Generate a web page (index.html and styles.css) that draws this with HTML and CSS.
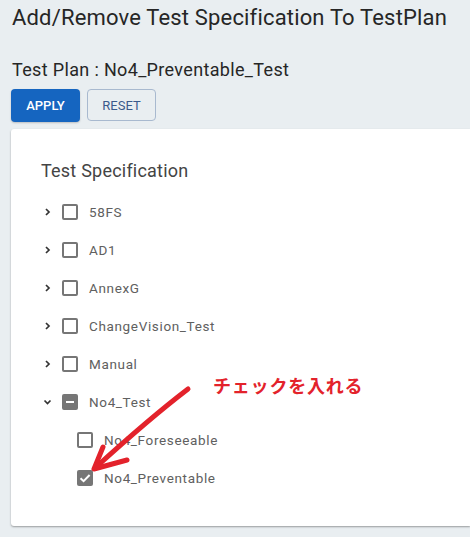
FILE: index.html
```html
<!DOCTYPE html>
<html lang="ja">
<head>
<meta charset="utf-8">
<title>Add/Remove Test Specification To TestPlan</title>
<link rel="stylesheet" href="styles.css">
</head>
<body>
<div class="page">
  <h1 class="title">Add/Remove Test Specification To TestPlan</h1>
  <div class="plan">Test Plan : No4_Preventable_Test</div>
  <div class="actions">
    <button class="btn btn-primary">APPLY</button>
    <button class="btn btn-outline">RESET</button>
  </div>
  <div class="card">
    <div class="card-title">Test Specification</div>
    <ul class="tree">
      <li class="row"><svg class="chev" viewBox="0 0 16 16" width="16" height="16"><path d="M5 5 L8 8 L5 11"/></svg><span class="cb"></span><span class="label">58FS</span></li>
      <li class="row"><svg class="chev" viewBox="0 0 16 16" width="16" height="16"><path d="M5 5 L8 8 L5 11"/></svg><span class="cb"></span><span class="label">AD1</span></li>
      <li class="row"><svg class="chev" viewBox="0 0 16 16" width="16" height="16"><path d="M5 5 L8 8 L5 11"/></svg><span class="cb"></span><span class="label">AnnexG</span></li>
      <li class="row"><svg class="chev" viewBox="0 0 16 16" width="16" height="16"><path d="M5 5 L8 8 L5 11"/></svg><span class="cb"></span><span class="label">ChangeVision_Test</span></li>
      <li class="row"><svg class="chev" viewBox="0 0 16 16" width="16" height="16"><path d="M5 5 L8 8 L5 11"/></svg><span class="cb"></span><span class="label">Manual</span></li>
      <li class="row"><svg class="chev" viewBox="0 0 16 16" width="16" height="16"><path d="M3.5 6.5 L6.5 9.5 L9.5 6.5"/></svg><span class="cb cb-ind"></span><span class="label">No4_Test</span></li>
      <li class="row child"><span class="cb"></span><span class="label">No4_Foreseeable</span></li>
      <li class="row child"><span class="cb cb-on"><svg viewBox="0 0 16 16" width="16" height="16"><path d="M3.5 8.2 L6.6 11.2 L12.6 5" fill="none" stroke="#fff" stroke-width="2"/></svg></span><span class="label">No4_Preventable</span></li>
    </ul>
  </div>
  <div class="note">チェックを入れる</div>
  <svg class="arrow" width="470" height="537" viewBox="0 0 470 537">
    <g fill="none" stroke="#e3222b" stroke-width="5" stroke-linecap="round" stroke-linejoin="round">
      <path d="M188 389 Q150 418 95 468"/>
      <path d="M103 447 L94 469 L127 460"/>
    </g>
  </svg>
</div>
</body>
</html>
```
FILE: styles.css
```css
html, body {
  margin: 0;
  padding: 0;
}
body {
  background: #e9eef1;
  font-family: Roboto, "Noto Sans", "Noto Sans CJK JP", sans-serif;
  color: #333;
  width: 470px;
  height: 537px;
  overflow: hidden;
}
.page {
  position: relative;
  padding: 0 0 0 11px;
  height: 537px;
}
.title {
  margin: 0;
  padding-top: 3px;
  font-size: 22px;
  font-weight: 400;
  line-height: 30px;
  color: #262626;
  padding-left: 1px;
  letter-spacing: 0.17px;
  white-space: nowrap;
}
.plan {
  margin-top: 25px;
  padding-left: 1px;
  font-size: 18px;
  line-height: 24px;
  color: #262626;
  letter-spacing: 0.34px;
}
.actions {
  display: flex;
  gap: 7px;
  margin-top: 7px;
}
.btn {
  font-family: Roboto, "Noto Sans", sans-serif;
  font-size: 13px;
  height: 33px;
  width: 69px;
  border-radius: 4px;
  padding: 0;
  cursor: pointer;
}
.btn-primary {
  background: #1565c0;
  color: #fff;
  border: none;
  font-weight: 500;
  box-shadow: 0 1px 2px rgba(0,0,0,0.2);
}
.btn-outline {
  background: transparent;
  color: #3b5a8c;
  border: 1px solid #a8b9cf;
  height: 32px;
}
.card {
  margin-top: 7px;
  background: #fff;
  border-radius: 3px 0 0 3px;
  box-shadow: 0 1px 2px rgba(0,0,0,0.35);
  padding: 30px 0 29px 30px;
  height: 338px;
}
.card-title {
  font-size: 18px;
  line-height: 24px;
  color: #444;
  letter-spacing: 0.22px;
}
.tree {
  list-style: none;
  margin: 10px 0 0 0;
  padding: 0;
}
.row {
  display: flex;
  align-items: center;
  height: 38px;
  font-size: 13.5px;
  color: #606060;
  letter-spacing: 0.65px;
}
.row.child {
  padding-left: 36px;
}
.chev {
  width: 16px;
  height: 16px;
  margin-right: 5px;
  flex-shrink: 0;
  fill: none;
  stroke: #333;
  stroke-width: 1.7;
}
.cb {
  width: 16px;
  height: 16px;
  box-sizing: border-box;
  border: 2px solid #767676;
  border-radius: 2px;
  margin-right: 11px;
  display: flex;
  align-items: center;
  justify-content: center;
  flex-shrink: 0;
}
.cb-ind {
  background: #767676;
}
.cb-ind::before {
  content: "";
  width: 8px;
  height: 2px;
  background: #fff;
}
.cb-on {
  background: #767676;
  border: none;
}
.cb-on svg {
  display: block;
}
.note {
  position: absolute;
  left: 213px;
  top: 373px;
  font-family: "Noto Sans CJK JP", sans-serif;
  font-weight: 700;
  font-size: 18px;
  letter-spacing: 0.8px;
  color: #e3222b;
  line-height: 24px;
}
.arrow {
  position: absolute;
  left: 0;
  top: 0;
  pointer-events: none;
}
```
